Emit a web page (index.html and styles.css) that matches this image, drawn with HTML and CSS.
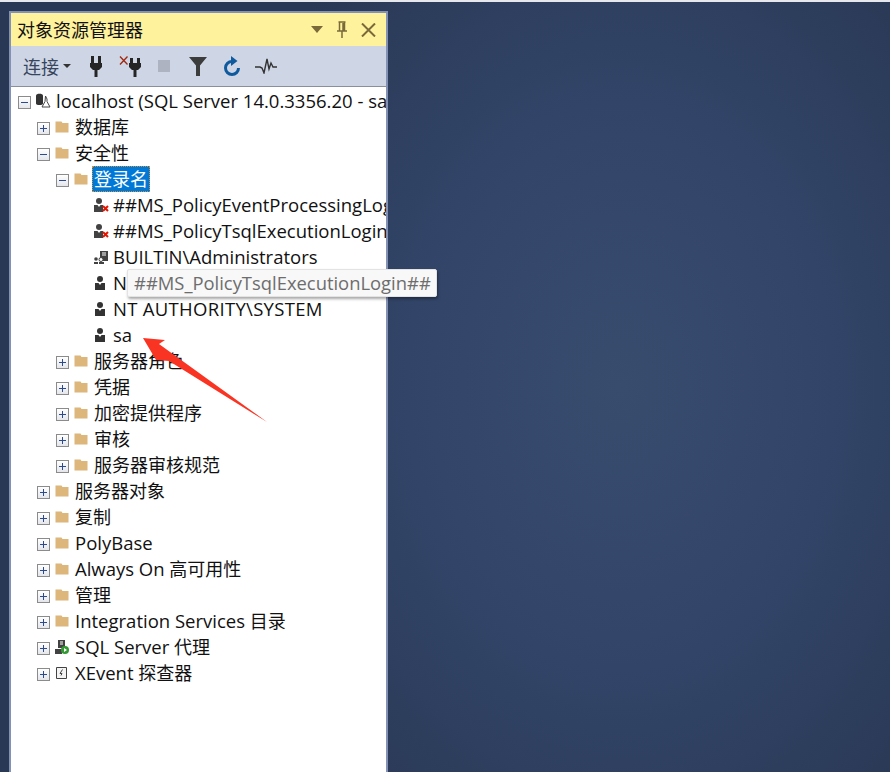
FILE: index.html
```html
<!DOCTYPE html>
<html lang="zh-CN">
<head>
<meta charset="utf-8">
<title>对象资源管理器</title>
<link rel="stylesheet" href="styles.css">
</head>
<body>
<svg width="0" height="0" class="defs">
  <symbol id="folder" viewBox="0 0 14 14"><path d="M.5 1.500h6l1 1.500h6v9.500H.5z" fill="#dcb67a"/></symbol>
  <symbol id="user" viewBox="0 0 16 14"><circle cx="7" cy="3" r="3" fill="#333"/><path d="M2 7h3.500L7 9l1.500-2H12v7H2z" fill="#333"/></symbol>
  <symbol id="userx" viewBox="0 0 16 14"><circle cx="6" cy="3" r="3" fill="#424242"/><path d="M1 7h3.500L6 9l1.500-2H10v7H1z" fill="#424242"/><path d="M10 8l5 5M15 8l-5 5" stroke="#e51400" stroke-width="2"/></symbol>
</svg>
<div class="desktop">
  <div class="strip"></div>
  <section class="panel">
    <header class="title">
      <span class="title-text">对象资源管理器</span>
      <span class="title-actions">
        <svg width="12" height="7" viewBox="0 0 12 7"><path d="M0 0h12L6 7z" fill="#7a6a3a"/></svg>
        <svg width="12" height="17" viewBox="0 0 12 17"><path d="M2.500 1h7M3.500 1v9M8.500 1v9M1 10h10M6 10v7M7 2v8" stroke="#7a6a3a" stroke-width="1.500" fill="none"/></svg>
        <svg width="15" height="14" viewBox="0 0 15 14"><path d="M1 .5l13 13M14 .5l-13 13" stroke="#7a6a3a" stroke-width="2" fill="none"/></svg>
      </span>
    </header>
    <div class="toolbar">
      <span class="connect">连接</span>
      <svg class="caret" width="8" height="4" viewBox="0 0 8 4"><path d="M0 0h8L4 4z" fill="#333"/></svg>
      <svg class="tool plug" width="12" height="21" viewBox="0 0 12 21"><path d="M1 0h3v7H1zM8 0h3v7H8zM0 7h12v4l-3 3H3l-3-3zM4.500 14h3v7h-3z" fill="#252526"/></svg>
      <svg class="tool unplug" width="22" height="21" viewBox="0 0 22 21"><path d="M1 .5l7.500 8M8.500 .5L1 8.500" stroke="#a1260d" stroke-width="1.300"/><path d="M11 2h3v5h-3zM18 2h3v5h-3zM10 7h12v4l-3 3h-6l-3-3zM14.500 14h3v7h-3z" fill="#252526"/></svg>
      <span class="stop"></span>
      <svg class="tool filter" width="18" height="19" viewBox="0 0 18 19"><path d="M0 0h18L11 8.500V19H7V8.500z" fill="#3c3c3c"/></svg>
      <svg class="tool refresh" width="18" height="20" viewBox="0 0 18 20"><path d="M9 5.500A6.500 6.500 0 1 0 15.500 12" fill="none" stroke="#0e5a9d" stroke-width="3"/><path d="M8 0l6.500 5L8 10z" fill="#0e5a9d"/></svg>
      <svg class="tool pulse" width="22" height="16" viewBox="0 0 22 16"><path d="M0 9h5l2 1 2 5 3-14 2 10 2-6 2 4h4" fill="none" stroke="#333" stroke-width="1.400"/></svg>
    </div>
    <div class="tree">
      <div class="row lvl0">
        <span class="exp minus"></span>
        <svg class="icon server" width="16" height="16" viewBox="0 0 16 16"><path d="M1 2.500c0-2.500 7-2.500 7 0v8c0 2-7 2-7 0z" fill="#333"/><path d="M10.500 3l1.500 3v2.500l3 5.500H7l3-5.500z" fill="#fff" stroke="#444"/></svg>
        <span class="lbl lat">localhost (SQL Server 14.0.3356.20 - sa</span>
      </div>
      <div class="row lvl1"><span class="exp plus"></span><svg class="icon"><use href="#folder"/></svg><span class="lbl">数据库</span></div>
      <div class="row lvl1"><span class="exp minus"></span><svg class="icon"><use href="#folder"/></svg><span class="lbl">安全性</span></div>
      <div class="row lvl2"><span class="exp minus"></span><svg class="icon"><use href="#folder"/></svg><span class="lbl selected">登录名</span></div>
      <div class="row lvl3"><svg class="icon uicon"><use href="#userx"/></svg><span class="lbl lat">##MS_PolicyEventProcessingLogin##</span></div>
      <div class="row lvl3"><svg class="icon uicon"><use href="#userx"/></svg><span class="lbl lat">##MS_PolicyTsqlExecutionLogin##</span></div>
      <div class="row lvl3">
        <svg class="icon uicon" viewBox="0 0 16 14"><path d="M7 1h8v10H7z" fill="#424242"/><path d="M9 3h4M9 5h4" stroke="#fff"/><circle cx="3" cy="9" r="1.800" fill="#424242"/><circle cx="8" cy="9.500" r="2" fill="#fff" stroke="#424242"/><path d="M1 12h4v2H1zM6 12h5v2H6z" fill="#424242"/></svg>
        <span class="lbl lat">BUILTIN\Administrators</span>
      </div>
      <div class="row lvl3"><svg class="icon uicon"><use href="#user"/></svg><span class="lbl lat">N</span></div>
      <div class="row lvl3"><svg class="icon uicon"><use href="#user"/></svg><span class="lbl lat caps">NT AUTHORITY\SYSTEM</span></div>
      <div class="row lvl3"><svg class="icon uicon"><use href="#user"/></svg><span class="lbl lat">sa</span></div>
      <div class="row lvl2"><span class="exp plus"></span><svg class="icon"><use href="#folder"/></svg><span class="lbl">服务器角色</span></div>
      <div class="row lvl2"><span class="exp plus"></span><svg class="icon"><use href="#folder"/></svg><span class="lbl">凭据</span></div>
      <div class="row lvl2"><span class="exp plus"></span><svg class="icon"><use href="#folder"/></svg><span class="lbl">加密提供程序</span></div>
      <div class="row lvl2"><span class="exp plus"></span><svg class="icon"><use href="#folder"/></svg><span class="lbl">审核</span></div>
      <div class="row lvl2"><span class="exp plus"></span><svg class="icon"><use href="#folder"/></svg><span class="lbl">服务器审核规范</span></div>
      <div class="row lvl1"><span class="exp plus"></span><svg class="icon"><use href="#folder"/></svg><span class="lbl">服务器对象</span></div>
      <div class="row lvl1"><span class="exp plus"></span><svg class="icon"><use href="#folder"/></svg><span class="lbl">复制</span></div>
      <div class="row lvl1"><span class="exp plus"></span><svg class="icon"><use href="#folder"/></svg><span class="lbl lat">PolyBase</span></div>
      <div class="row lvl1"><span class="exp plus"></span><svg class="icon"><use href="#folder"/></svg><span class="lbl"><span class="lat">Always On</span> 高可用性</span></div>
      <div class="row lvl1"><span class="exp plus"></span><svg class="icon"><use href="#folder"/></svg><span class="lbl">管理</span></div>
      <div class="row lvl1"><span class="exp plus"></span><svg class="icon"><use href="#folder"/></svg><span class="lbl"><span class="lat">Integration Services</span> 目录</span></div>
      <div class="row lvl1"><span class="exp plus"></span>
        <svg class="icon" viewBox="0 0 14 14"><path d="M3 0h7v8H3z" fill="#424242"/><path d="M5 2h3M5 4h3" stroke="#fff"/><path d="M0 9h7v5H0z" fill="#424242"/><circle cx="10" cy="10" r="4" fill="#339933"/><path d="M9 8l3 2-3 2z" fill="#fff"/></svg>
        <span class="lbl"><span class="lat">SQL Server</span> 代理</span></div>
      <div class="row lvl1"><span class="exp plus"></span>
        <svg class="icon" viewBox="0 0 14 14"><path d="M1.500 1.500h10v11h-10z" fill="#f4f4f4" stroke="#424242"/><path d="M7.500 3.500L5 7.500h2l-1 2" fill="none" stroke="#424242"/></svg>
        <span class="lbl"><span class="lat">XEvent</span> 探查器</span></div>
    </div>
  </section>
  <div class="tooltip">##MS_PolicyTsqlExecutionLogin##</div>
  <svg class="arrow" width="132" height="92" viewBox="0 0 132 92"><path d="M4 5L26 7 L20 11 L128 89 L30 28 L17 27z" fill="#fa3423"/></svg>
</div>
</body>
</html>
```
FILE: styles.css
```css
* { box-sizing: border-box; }
html, body { margin: 0; height: 100%; }
body { overflow: hidden; }
.defs { position: absolute; }
.desktop {
  position: relative;
  width: 890px;
  height: 772px;
  padding-left: 9px;
  display: flex;
  flex-direction: column;
  overflow: hidden;
  background: radial-gradient(ellipse 420px 560px at 620px 386px, #384c6e 0%, #33466a 45%, #293854 100%);
  font-family: "Open Sans", "Noto Sans CJK SC", sans-serif;
  font-size: 18px;
}
.strip { height: 2px; margin-left: -9px; margin-bottom: 9px; flex: none; background: #e6e8ee; }
.panel {
  width: 379px;
  flex: 1;
  min-height: 0;
  display: flex;
  flex-direction: column;
  border: 2px solid #8391b4;
  border-bottom: 0;
  background: #fff;
}
.title {
  height: 33px;
  flex: none;
  padding: 0 10px 0 6px;
  display: flex;
  align-items: center;
  justify-content: space-between;
  background: #fff29d;
  color: #111;
}
.title-text { font-size: 18px; padding-bottom: 2px; font-family: "Noto Sans CJK SC", sans-serif; }
.title-actions { display: flex; align-items: center; gap: 13px; }
.toolbar {
  height: 41px;
  flex: none;
  padding-left: 12px;
  display: flex;
  align-items: center;
  background: #ced6e6;
  border-bottom: 1px solid #8a8f9c;
}
.connect { color: #36445c; font-family: "Noto Sans CJK SC", sans-serif; }
.caret { margin-left: 4px; }
.tool { flex: none; }
.plug { margin-left: 19px; }
.unplug { margin-left: 17px; }
.stop { width: 12px; height: 12px; margin-left: 17px; background: #aeb3c2; flex: none; }
.filter { margin-left: 19px; }
.refresh { margin-left: 16px; }
.pulse { margin-left: 14px; }
.tree { flex: 1; min-height: 0; overflow: hidden; padding: 1px 0 0 7px; color: #111; }
.row { height: 26px; display: flex; align-items: center; white-space: nowrap; }
.lvl1 { padding-left: 19px; }
.lvl2 { padding-left: 38px; }
.lvl3 { padding-left: 75px; }
.exp {
  position: relative;
  top: 1px;
  width: 13px;
  height: 13px;
  flex: none;
  border: 1px solid #8b8b8b;
  background: linear-gradient(#fff, #e4e6ea);
}
.exp::before {
  content: "";
  position: absolute;
  left: 2px;
  top: 5px;
  width: 7px;
  height: 1px;
  background: #2d4a8c;
}
.plus::after {
  content: "";
  position: absolute;
  left: 5px;
  top: 2px;
  width: 1px;
  height: 7px;
  background: #2d4a8c;
}
.icon { width: 14px; height: 14px; margin-left: 5px; margin-right: 5px; flex: none; }
.server { width: 16px; height: 16px; margin-left: 4px; margin-right: 4px; }
.uicon { width: 16px; margin-left: 0; margin-right: 3px; }
.lbl { display: inline-block; line-height: 24px; padding: 0 1px; }
.lat { font-size: 18.5px; }
.caps { letter-spacing: .3px; }
.selected {
  padding: 0 2px;
  margin-left: -1px;
  line-height: 26px;
  background: #0078d7;
  color: #fff;
  outline: 1px dotted #d9902f;
  outline-offset: -1px;
}
.tooltip {
  position: absolute;
  left: 127px;
  top: 269px;
  height: 28px;
  width: 310px;
  padding-left: 6px;
  line-height: 25px;
  font-size: 18.4px;
  color: #6d6d6d;
  background: #f8f8f8;
  border: 1px solid #e3e3e3;
  border-radius: 2px;
  box-shadow: 1px 2px 3px rgba(0, 0, 0, .35);
}
.arrow { position: absolute; left: 139px; top: 333px; }
```
